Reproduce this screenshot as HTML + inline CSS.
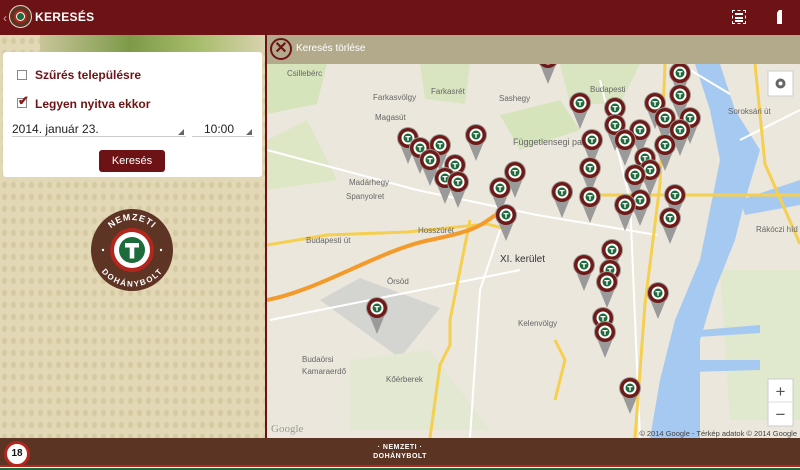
<!DOCTYPE html>
<html><head><meta charset="utf-8"><style>
*{margin:0;padding:0;box-sizing:border-box}
body{width:800px;height:470px;overflow:hidden;font-family:"Liberation Sans",sans-serif;position:relative;background:#e6ddbf}
.top{position:absolute;left:0;top:0;width:800px;height:35px;background:#6d1315}
.left{position:absolute;left:0;top:35px;width:265px;height:403px;background:#e2d8b5;
background-image:radial-gradient(ellipse at 50% 50%,#d4c9a1 1.8px,transparent 3px);background-size:9px 12px}
.leaf{position:absolute;left:40px;top:35px;width:225px;height:18px;background:linear-gradient(90deg,#c9c59a,#7d9a48 40%,#a7bd6b 70%,#d8d2b0)}
.card{position:absolute;left:3px;top:52px;width:259px;height:125px;background:#fff;border-radius:3px}
.lbl{position:absolute;font-size:12px;font-weight:bold;color:#6d1315}
.cb{position:absolute;width:10px;height:10px;border:1px solid #888;left:14px}
.sep{position:absolute;left:267px;top:35px;width:533px;height:29px;background:#b2aa8b}
.vline{position:absolute;left:265px;top:35px;width:2px;height:403px;background:#6d1315}
.foot{position:absolute;left:0;top:438px;width:800px;height:32px;background:#5c3424}
</style></head><body>
<div class="top">
 <div style="position:absolute;left:3px;top:11px;color:#c9a9a9;font-size:12px">‹</div>
 <div style="position:absolute;left:9px;top:5px;width:23px;height:23px;border-radius:50%;background:#5c3424;border:1px solid #e8d8c8"><div style="position:absolute;left:4px;top:4px;width:13px;height:13px;border-radius:50%;background:#fff;border:2px solid #b3261e"><div style="position:absolute;left:1px;top:1px;width:7px;height:7px;border-radius:50%;background:#1d6b3a"></div></div></div>
 <div style="position:absolute;left:35px;top:10px;color:#fff;font-weight:bold;font-size:12px;letter-spacing:0.3px">KERESÉS</div>
 <div style="position:absolute;left:732px;top:10px;width:14px;height:14px;border:1px dashed #fff;padding:2px 2px"><div style="height:2px;background:#fff;margin-bottom:1.5px"></div><div style="height:2px;background:#fff;margin-bottom:1.5px"></div><div style="height:2px;background:#fff"></div></div>
 <div style="position:absolute;left:777px;top:10px;width:5px;height:14px;background:#fff;clip-path:polygon(40% 0,100% 0,100% 100%,0 100%,0 20%)"></div>
</div>
<div class="left"></div>
<div class="leaf"></div>
<div class="card">
 <div class="cb" style="top:18px"></div><div class="lbl" style="left:32px;top:16px">Szűrés településre</div>
 <div class="cb" style="top:46px"></div><div style="position:absolute;left:15px;top:41px;color:#8b1a1a;font-size:13px;font-weight:bold">✔</div>
 <div class="lbl" style="left:32px;top:45px">Legyen nyitva ekkor</div>
 <div style="position:absolute;left:9px;top:70px;font-size:12px;color:#222">2014. január 23.</div>
 <div style="position:absolute;left:9px;top:84px;width:174px;height:1px;background:#ccc"></div>
 <div style="position:absolute;left:175px;top:77px;width:0;height:0;border-left:6px solid transparent;border-bottom:6px solid #666"></div>
 <div style="position:absolute;left:201px;top:70px;font-size:12px;color:#222">10:00</div>
 <div style="position:absolute;left:189px;top:84px;width:62px;height:1px;background:#ccc"></div>
 <div style="position:absolute;left:243px;top:77px;width:0;height:0;border-left:6px solid transparent;border-bottom:6px solid #666"></div>
 <div style="position:absolute;left:96px;top:98px;width:66px;height:22px;background:#6d1315;border-radius:3px;color:#fff;font-size:11px;text-align:center;line-height:22px">Keresés</div>
</div>
<svg style="position:absolute;left:90px;top:208px" width="84" height="84" viewBox="0 0 84 84">
 <defs>
  <path id="tp" d="M12 42 A30 30 0 0 1 72 42"/>
  <path id="bp" d="M9 40 A33 33 0 0 0 75 40"/>
 </defs>
 <circle cx="42" cy="42" r="41" fill="#5e3425"/>
 <circle cx="42" cy="42" r="22" fill="#b3261e"/>
 <circle cx="42" cy="42" r="18" fill="#fff"/>
 <circle cx="42" cy="42" r="13" fill="#1d6b3a"/>
 <path d="M35 35h14v4.5h-4.7v11h-4.6v-11h-4.7z" fill="#fff"/>
 <text font-size="9" font-weight="bold" fill="#fff" font-family="Liberation Sans" letter-spacing="1"><textPath href="#tp" startOffset="50%" text-anchor="middle">NEMZETI</textPath></text>
 <text font-size="8" font-weight="bold" fill="#fff" font-family="Liberation Sans" letter-spacing="0.5"><textPath href="#bp" startOffset="50%" text-anchor="middle" dominant-baseline="hanging">DOHÁNYBOLT</textPath></text>
 <circle cx="13" cy="42" r="1.2" fill="#fff"/><circle cx="71" cy="42" r="1.2" fill="#fff"/>
</svg>
<div class="vline"></div>
<div class="sep">
 <div style="position:absolute;left:3px;top:3px;width:22px;height:22px;border-radius:50%;border:2px solid #6d1315;color:#6d1315;font-weight:bold;font-size:16px;text-align:center;line-height:18px">✕</div>
 <div style="position:absolute;left:29px;top:8px;font-size:10px;color:#fff">Keresés törlése</div>
</div>
<svg style="position:absolute;left:267px;top:64px" width="533" height="374" viewBox="267 64 533 374">
 <defs>
  <g id="m">
   <path d="M-9 4 L0 26 L9 4 Z" fill="#9a9a9a"/>
   <circle r="11" fill="#9a9a9a"/>
   <circle r="10" fill="#6e1a17"/>
   <circle r="6.5" fill="#fff"/>
   <circle r="4.5" fill="#1d6b3a"/>
   <path d="M-2.5 -2h5v1.3h-1.8v3.5h-1.4v-3.5h-1.8z" fill="#fff"/>
  </g>
 </defs>
 <rect x="267" y="64" width="533" height="374" fill="#ece7dc"/>
 <path d="M267 64h60l-10 40-50 10z" fill="#d6e4bc"/>
 <path d="M420 64h50l-5 40-40-5z" fill="#d8e5c0"/>
 <path d="M500 115l60-15 20 30-60 20z" fill="#d6e4bc"/>
 <path d="M267 140l40-20 30 60-70 10z" fill="#dde7c6"/>
 <path d="M560 64h80l-20 40-50 0z" fill="#d8e5c0"/>
 <path d="M720 270h80v150h-70z" fill="#e0e8cd"/>
 <path d="M320 300l40-22 80 30-40 50z" fill="#d4d4d0"/>
 <path d="M350 360l80-10 60 80h-140z" fill="#e2e8d2"/>
 <path d="M695 64h25l15 46 25 40-15 50-10 40-20 50-15 50v98h-50l10-58 15-60 25-60 10-50 10-50-10-50z" fill="#a6c9f2"/>
 <path d="M740 200l60-20v25l-55 10z M700 330l60-5 0 8-62 4z M690 360l70 0v10l-72 2z" fill="#a6c9f2"/>
 <g fill="none" stroke="#fff" stroke-width="2">
  <path d="M267 150l150 40 120 25 120 20"/><path d="M500 230l-20 60 -10 148"/><path d="M600 80l30 120 10 238"/>
  <path d="M520 270l-100 20-150 30"/><path d="M680 64l50 30"/><path d="M740 140l60-30"/>
 </g>
 <g fill="none" stroke="#f5cf4f" stroke-width="3">
  <path d="M267 245l60-10 80-3 80-8 20 5"/>
  <path d="M665 64l-5 120-15 120-10 134"/>
  <path d="M755 64l10 100 35 80"/>
  <path d="M470 220l-20 100 0 25 -10 20 -10 73"/>
  <path d="M555 400l10-40-10-20"/>
  <path d="M600 195h200"/>
 </g>
 <path d="M267 300 C320 290 380 250 430 240 S480 225 500 212" fill="none" stroke="#f39a2a" stroke-width="4"/>
 <g font-family="Liberation Sans" font-size="8" fill="#666">
  <text x="287" y="76">Csillebérc</text><text x="373" y="100">Farkasvölgy</text><text x="431" y="94">Farkasrét</text>
  <text x="375" y="120">Magasút</text><text x="499" y="101">Sashegy</text><text x="590" y="92">Budapesti</text>
  <text x="513" y="145" font-size="9">Függetlensegi park</text><text x="349" y="185">Madárhegy</text><text x="346" y="199">Spanyolret</text>
  <text x="418" y="233">Hosszúrét</text><text x="306" y="243">Budapesti út</text><text x="386" y="382">Kőérberek</text>
  <text x="302" y="362">Budaörsi</text><text x="302" y="374">Kamaraerdő</text><text x="387" y="284">Örsöd</text>
  <text x="518" y="326">Kelenvölgy</text><text x="756" y="232">Rákóczi híd</text><text x="728" y="114">Soroksári út</text>
 </g>
 <text x="500" y="262" font-family="Liberation Sans" font-size="10" fill="#333">XI. kerület</text>
 <text x="271" y="432" font-family="Liberation Serif" font-size="11" fill="#999">Google</text>
 <text x="797" y="436" text-anchor="end" font-family="Liberation Sans" font-size="7.5" fill="#444">© 2014 Google - Térkép adatok © 2014 Google</text>
 <rect x="768" y="71" width="25" height="25" fill="#fff" stroke="#ccc"/><circle cx="780.5" cy="83.5" r="5" fill="#666"/><circle cx="780.5" cy="83.5" r="2" fill="#fff"/>
 <rect x="768" y="379" width="25" height="47" fill="#fff" stroke="#ccc"/><line x1="768" y1="402" x2="793" y2="402" stroke="#ddd"/>
 <text x="780.5" y="397" text-anchor="middle" font-size="17" fill="#555" font-family="Liberation Sans">+</text>
 <text x="780.5" y="420" text-anchor="middle" font-size="17" fill="#555" font-family="Liberation Sans">−</text>
 <g>
  <use href="#m" x="548" y="58"/><use href="#m" x="680" y="73"/><use href="#m" x="680" y="95"/><use href="#m" x="580" y="103"/>
  <use href="#m" x="655" y="103"/><use href="#m" x="615" y="108"/><use href="#m" x="665" y="118"/><use href="#m" x="690" y="118"/>
  <use href="#m" x="408" y="138"/><use href="#m" x="476" y="135"/><use href="#m" x="420" y="148"/><use href="#m" x="440" y="145"/>
  <use href="#m" x="592" y="140"/><use href="#m" x="615" y="125"/><use href="#m" x="640" y="130"/><use href="#m" x="680" y="130"/>
  <use href="#m" x="625" y="140"/><use href="#m" x="665" y="145"/><use href="#m" x="430" y="160"/><use href="#m" x="455" y="165"/>
  <use href="#m" x="645" y="158"/><use href="#m" x="590" y="168"/><use href="#m" x="650" y="170"/><use href="#m" x="515" y="172"/>
  <use href="#m" x="635" y="175"/><use href="#m" x="445" y="178"/><use href="#m" x="458" y="182"/><use href="#m" x="500" y="188"/>
  <use href="#m" x="562" y="192"/><use href="#m" x="590" y="197"/><use href="#m" x="675" y="195"/><use href="#m" x="640" y="200"/>
  <use href="#m" x="625" y="205"/><use href="#m" x="506" y="215"/><use href="#m" x="670" y="218"/><use href="#m" x="612" y="250"/>
  <use href="#m" x="584" y="265"/><use href="#m" x="610" y="270"/><use href="#m" x="607" y="282"/><use href="#m" x="658" y="293"/>
  <use href="#m" x="377" y="308"/><use href="#m" x="603" y="318"/><use href="#m" x="605" y="332"/><use href="#m" x="630" y="388"/>
 </g>
</svg>
<div class="foot">
 <div style="position:absolute;left:4px;top:3px;width:26px;height:26px;border-radius:50%;background:#fff;border:3px solid #b3261e;font-weight:bold;font-size:10px;text-align:center;line-height:20px;color:#111">18</div>
 <div style="position:absolute;left:360px;top:5px;width:80px;text-align:center;color:#fff;font-weight:bold;font-size:7px;line-height:9px;letter-spacing:0.5px">· NEMZETI ·<br>DOHÁNYBOLT</div>
 <div style="position:absolute;left:0;top:27px;width:800px;height:2px;background:#b3261e"></div>
 <div style="position:absolute;left:0;top:29px;width:800px;height:1px;background:#fff"></div>
 <div style="position:absolute;left:0;top:30px;width:800px;height:2px;background:#1d6b3a"></div>
</div>
</body></html>
